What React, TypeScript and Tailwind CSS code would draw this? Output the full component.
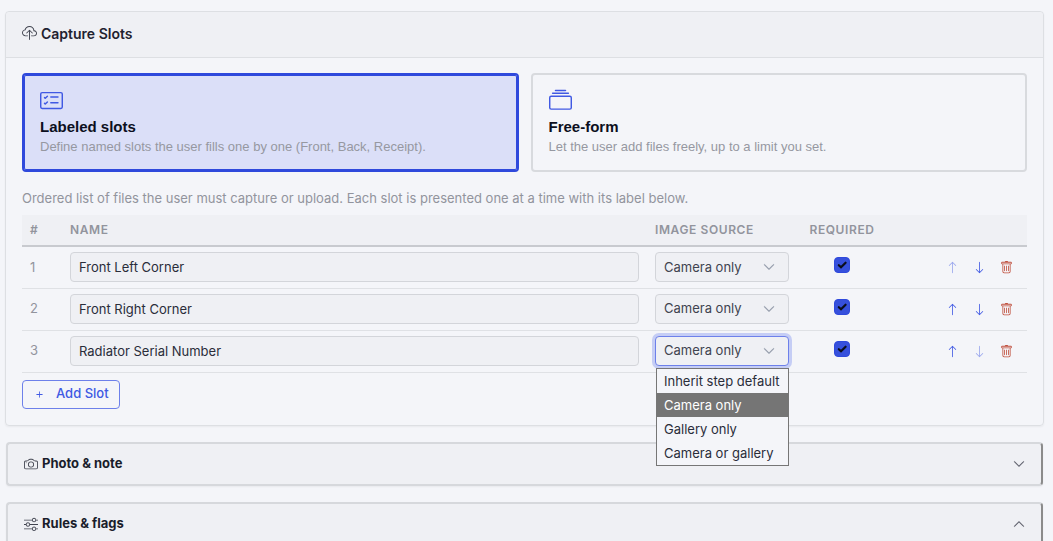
import { useState } from 'react';
import clsx from 'clsx';
import {
    BsArrowDown,
    BsArrowUp,
    BsCamera,
    BsCardChecklist,
    BsChevronDown,
    BsChevronUp,
    BsCloudUpload,
    BsCollection,
    BsPlus,
    BsSliders,
    BsTrash,
} from 'react-icons/bs';

const SOURCES = ['Inherit step default', 'Camera only', 'Gallery only', 'Camera or gallery'];

const initialSlots = [
    { id: 1, name: 'Front Left Corner', source: 'Camera only', required: true },
    { id: 2, name: 'Front Right Corner', source: 'Camera only', required: true },
    { id: 3, name: 'Radiator Serial Number', source: 'Camera only', required: true },
];

const modes = [
    {
        id: 'labeled',
        title: 'Labeled slots',
        text: 'Define named slots the user fills one by one (Front, Back, Receipt).',
        Icon: BsCardChecklist,
    },
    {
        id: 'free',
        title: 'Free-form',
        text: 'Let the user add files freely, up to a limit you set.',
        Icon: BsCollection,
    },
];

function SourceSelect({ label, value, open, onChange }: {
    label: string;
    value: string;
    open: boolean;
    onChange: (value: string) => void;
}) {
    return (
        <div className="relative">
            <select
                aria-label={label}
                value={value}
                onChange={(e) => onChange(e.target.value)}
                className={clsx(
                    'block w-full h-[30px] appearance-none rounded border bg-[#eff0f4] pl-2 pr-8 text-[13px] text-[#40434f] outline-none',
                    open ? 'border-[#6d80ea] ring-3 ring-[#c5cdf5]' : 'border-[#d3d5da]'
                )}
            >
                {SOURCES.map((s) => (
                    <option key={s}>{s}</option>
                ))}
            </select>
            <BsChevronDown className="pointer-events-none absolute right-[14px] top-[9px] size-3 stroke-[#8e95a5] stroke-[0.6] text-[#8e95a5]" />

            {open && (
                <ul
                    role="listbox"
                    className="absolute left-px right-0 top-8 z-10 border border-[#767676] bg-[#f4f5f9]"
                >
                    {SOURCES.map((s) => (
                        <li
                            key={s}
                            role="option"
                            aria-selected={s === value}
                            className={clsx(
                                'h-6 whitespace-nowrap px-[7px] text-[13px] leading-6',
                                s === value ? 'bg-[#757575] text-white' : 'text-[#2a2d3a]'
                            )}
                        >
                            {s}
                        </li>
                    ))}
                </ul>
            )}
        </div>
    );
}

function CollapsedCard({ title, Icon, Chevron }: {
    title: string;
    Icon: typeof BsCamera;
    Chevron: typeof BsCamera;
}) {
    return (
        <button
            type="button"
            className="mx-px flex h-11 items-center rounded border-2 border-[#d6d8dc] border-r-[#8b8b8b] bg-[#eff0f4] px-4 text-left shadow-xs"
        >
            <Icon className="mr-1 size-[14px] text-[#40434f]" />
            <span className="flex-1 text-[13px] font-bold text-[#1a1d2b]">{title}</span>
            <Chevron className="size-3 stroke-[#50535e] stroke-[0.4] text-[#50535e]" />
        </button>
    );
}

export default function App() {
    const [slots, setSlots] = useState(initialSlots);
    const [mode, setMode] = useState('labeled');

    const update = (id: number, patch: Partial<(typeof initialSlots)[number]>) => {
        setSlots(slots.map((s) => (s.id === id ? { ...s, ...patch } : s)));
    };

    return (
        <main className="h-screen overflow-hidden bg-[#f4f5f9] pl-[5px] pr-[9px] pt-[11px] font-['Inter',sans-serif] text-[13px]">
            <div className="flex flex-col gap-4">
                {/* Capture slots */}
                <section className="rounded border border-[#dddfe3] shadow-xs">
                    <header className="flex h-[46px] items-center gap-1 rounded-t border-b border-[#dddfe3] bg-[#eff0f4] px-4 pb-0.5">
                        <BsCloudUpload className="size-[15px] text-[#40434f]" />
                        <h2 className="text-[14px] font-semibold text-[#1f2230]">Capture Slots</h2>
                    </header>

                    <div className="px-4 pb-4 pt-[15px]">
                        <div className="grid grid-cols-2 gap-3">
                            {modes.map(({ id, title, text, Icon }) => (
                                <button
                                    key={id}
                                    type="button"
                                    aria-pressed={mode === id}
                                    onClick={() => setMode(id)}
                                    className={clsx(
                                        "flex h-[99px] flex-col items-start rounded border-2 px-4 pt-[14px] text-left font-['Liberation_Sans',Arial,sans-serif]",
                                        mode === id
                                            ? 'border-[#2f49dc] bg-[#dbdff8] ring-1 ring-inset ring-[#2f49dc]'
                                            : 'border-[#d8dade]'
                                    )}
                                >
                                    <Icon className="size-[23px] text-[#4059e3]" />
                                    <span className="mt-[5px] text-[15px] font-bold leading-5 text-[#0c0f20]">{title}</span>
                                    <span className="text-[13px] leading-5 text-[#9698a1]">{text}</span>
                                </button>
                            ))}
                        </div>

                        <p className="mt-4 leading-5 text-[#92949d]">
                            Ordered list of files the user must capture or upload. Each slot is presented one at a time with its label below.
                        </p>

                        <table className="mt-[7px] w-full table-fixed border-collapse">
                            <thead>
                                <tr className="h-[31px] border-b-2 border-[#c8cacf] bg-[#eff0f4] text-left text-[12px] tracking-wider text-[#92949d]">
                                    <th className="w-10 px-2 font-semibold">#</th>
                                    <th className="px-2 font-semibold">NAME</th>
                                    <th className="w-[150px] px-2 font-semibold">IMAGE SOURCE</th>
                                    <th className="w-[90px] text-center font-semibold">REQUIRED</th>
                                    <th className="w-[140px]" aria-label="Actions" />
                                </tr>
                            </thead>
                            <tbody>
                                {slots.map((slot, i) => (
                                    <tr key={slot.id} className="h-[42px] border-b border-[#dfe1e5]">
                                        <td className="px-2 text-[#92949d]">{i + 1}</td>
                                        <td className="px-2">
                                            <input
                                                type="text"
                                                aria-label={`Slot ${i + 1} name`}
                                                value={slot.name}
                                                onChange={(e) => update(slot.id, { name: e.target.value })}
                                                className="block w-full h-[30px] rounded border border-[#d3d5da] bg-[#eff0f4] px-2 text-[#2a2d3a] outline-none"
                                            />
                                        </td>
                                        <td className="px-2">
                                            <SourceSelect
                                                label={`Slot ${i + 1} image source`}
                                                value={slot.source}
                                                open={i === 2}
                                                onChange={(source) => update(slot.id, { source })}
                                            />
                                        </td>
                                        <td className="pb-1">
                                            <span className="mx-auto grid size-4 place-items-center">
                                                <input
                                                    type="checkbox"
                                                    aria-label={`Slot ${i + 1} required`}
                                                    checked={slot.required}
                                                    onChange={(e) => update(slot.id, { required: e.target.checked })}
                                                    className="col-start-1 row-start-1 size-4 appearance-none rounded border border-[#2f49dc] checked:bg-[#3650dc]"
                                                />
                                                {slot.required && (
                                                    <svg viewBox="0 0 16 16" className="pointer-events-none col-start-1 row-start-1 size-4" fill="none">
                                                        <path d="M4.8 8.2 7 10.3l4.6-4.6" stroke="#0b0e1c" strokeWidth="2.2" strokeLinecap="round" />
                                                    </svg>
                                                )}
                                            </span>
                                        </td>
                                        <td>
                                            <div className="flex justify-end gap-[14px] pr-[14px] text-[#4059e3]">
                                                <button type="button" aria-label="Move up" disabled={i === 0} className="disabled:opacity-50">
                                                    <BsArrowUp className="size-[13px]" />
                                                </button>
                                                <button type="button" aria-label="Move down" disabled={i === slots.length - 1} className="disabled:opacity-50">
                                                    <BsArrowDown className="size-[13px]" />
                                                </button>
                                                <button type="button" aria-label="Delete slot" className="text-[#c0503f]">
                                                    <BsTrash className="size-[13px]" />
                                                </button>
                                            </div>
                                        </td>
                                    </tr>
                                ))}
                            </tbody>
                        </table>

                        <button
                            type="button"
                            className="mt-[7px] flex h-[29px] items-center gap-[10px] rounded border border-[#6d80ea] px-[10px] font-medium text-[#4059e3]"
                        >
                            <BsPlus className="size-[13px]" />
                            Add Slot
                        </button>
                    </div>
                </section>

                <CollapsedCard title="Photo & note" Icon={BsCamera} Chevron={BsChevronDown} />
                <CollapsedCard title="Rules & flags" Icon={BsSliders} Chevron={BsChevronUp} />
            </div>
        </main>
    );
}
